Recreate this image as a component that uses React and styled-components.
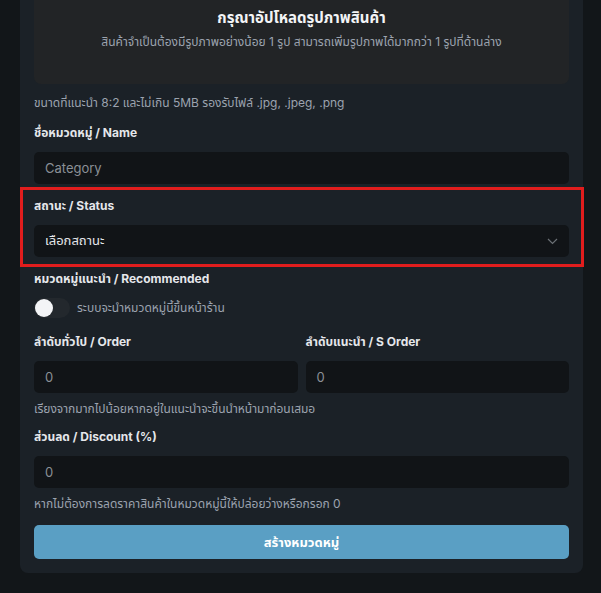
import React from "react";
import styled, { createGlobalStyle } from "styled-components";

const Global = createGlobalStyle`
  html, body { margin: 0; padding: 0; background: #121619; }
  body {
    font-family: Inter, "Noto Sans Thai", "Noto Sans", "DejaVu Sans", sans-serif;
    color: #e5e7eb;
  }
  * { box-sizing: border-box; }
`;

const Page = styled.div`
  padding: 0 18px 20px 20px;
`;

const Card = styled.div`
  margin-top: -30px;
  background: #1b2127;
  border-radius: 8px;
  padding: 14px;
  display: flex;
  flex-direction: column;
  gap: 14px;
`;

const Upload = styled.div`
  height: 100px;
  background: #222426;
  border-radius: 7px;
  padding-top: 24px;
  display: flex;
  flex-direction: column;
  align-items: center;
`;

const UploadTitle = styled.div`
  font-size: 15px;
  font-weight: 700;
  line-height: 20px;
  height: 20px;
  color: #f3f4f6;
`;

const UploadSub = styled.div`
  margin-top: 6px;
  font-size: 12px;
  line-height: 16px;
  height: 16px;
  color: #9ca3af;
`;

const Field = styled.div`
  position: relative;
  display: flex;
  flex-direction: column;
  margin-top: ${(p) => p.$mt || 0}px;
`;

const Label = styled.div`
  font-size: 12px;
  font-weight: 700;
  line-height: 16px;
  height: 16px;
  color: #e5e7eb;
  margin-bottom: 11px;
  white-space: nowrap;
`;

const Help = styled.div`
  font-size: 12px;
  line-height: 16px;
  height: 16px;
  color: #9ca3af;
  margin-top: ${(p) => p.$mt || 8}px;
  white-space: nowrap;
`;

const Input = styled.div`
  height: 32px;
  flex: none;
  background: #111417;
  border-radius: 5px;
  padding: 0 11px;
  display: flex;
  align-items: center;
  justify-content: space-between;
  font-size: 13px;
  color: ${(p) => (p.$value ? "#e5e7eb" : "#8b9096")};
`;

const Highlight = styled.div`
  position: absolute;
  top: -11px;
  bottom: -10px;
  left: -14px;
  right: -15px;
  border: 3px solid #e11d1d;
  pointer-events: none;
`;

const ToggleRow = styled.div`
  display: flex;
  align-items: center;
  gap: 7px;
  height: 24px;
  margin-top: -2px;
`;

const Track = styled.div`
  width: 36px;
  height: 20px;
  border-radius: 10px;
  background: #23282d;
  padding: 1px;
  display: flex;
  align-items: center;
`;

const Knob = styled.div`
  width: 18px;
  height: 18px;
  border-radius: 50%;
  background: #f3f4f6;
`;

const ToggleText = styled.span`
  font-size: 12px;
  line-height: 16px;
  color: #9ca3af;
`;

const Row = styled.div`
  display: grid;
  grid-template-columns: 1fr 1fr;
  gap: 8px;
`;

const Button = styled.button`
  height: 34px;
  flex: none;
  border: none;
  border-radius: 5px;
  background: #5a9fc4;
  color: #ffffff;
  font-family: inherit;
  font-size: 13px;
  font-weight: 700;
  line-height: 16px;
  margin-top: -1px;
`;

const Chevron = () => (
  <svg width="11" height="7" viewBox="0 0 11 7" fill="none">
    <path d="M1 1l4.5 4.5L10 1" stroke="#6b7075" strokeWidth="1.2" />
  </svg>
);

export default function App() {
  return (
    <Page>
      <Global />
      <Card>
        <Field>
          <Upload>
            <UploadTitle>กรุณาอัปโหลดรูปภาพสินค้า</UploadTitle>
            <UploadSub>
              สินค้าจำเป็นต้องมีรูปภาพอย่างน้อย 1 รูป สามารถเพิ่มรูปภาพได้มากกว่า 1 รูปที่ด้านล่าง
            </UploadSub>
          </Upload>
          <Help $mt={11}>ขนาดที่แนะนำ 8:2 และไม่เกิน 5MB รองรับไฟล์ .jpg, .jpeg, .png</Help>
        </Field>
        <Field>
          <Label>ชื่อหมวดหมู่ / Name</Label>
          <Input>Category</Input>
        </Field>
        <Field>
          <Label>สถานะ / Status</Label>
          <Input $value>
            เลือกสถานะ
            <Chevron />
          </Input>
          <Highlight />
        </Field>
        <Field>
          <Label>หมวดหมู่แนะนำ / Recommended</Label>
          <ToggleRow>
            <Track>
              <Knob />
            </Track>
            <ToggleText>ระบบจะนำหมวดหมู่นี้ขึ้นหน้าร้าน</ToggleText>
          </ToggleRow>
        </Field>
        <Field>
          <Row>
            <Field>
              <Label>ลำดับทั่วไป / Order</Label>
              <Input>0</Input>
            </Field>
            <Field>
              <Label>ลำดับแนะนำ / S Order</Label>
              <Input>0</Input>
            </Field>
          </Row>
          <Help>เรียงจากมากไปน้อยหากอยู่ในแนะนำจะขึ้นนำหน้ามาก่อนเสมอ</Help>
        </Field>
        <Field $mt={-2}>
          <Label>ส่วนลด / Discount (%)</Label>
          <Input>0</Input>
          <Help>หากไม่ต้องการลดราคาสินค้าในหมวดหมู่นี้ให้ปล่อยว่างหรือกรอก 0</Help>
        </Field>
        <Button>สร้างหมวดหมู่</Button>
      </Card>
    </Page>
  );
}
